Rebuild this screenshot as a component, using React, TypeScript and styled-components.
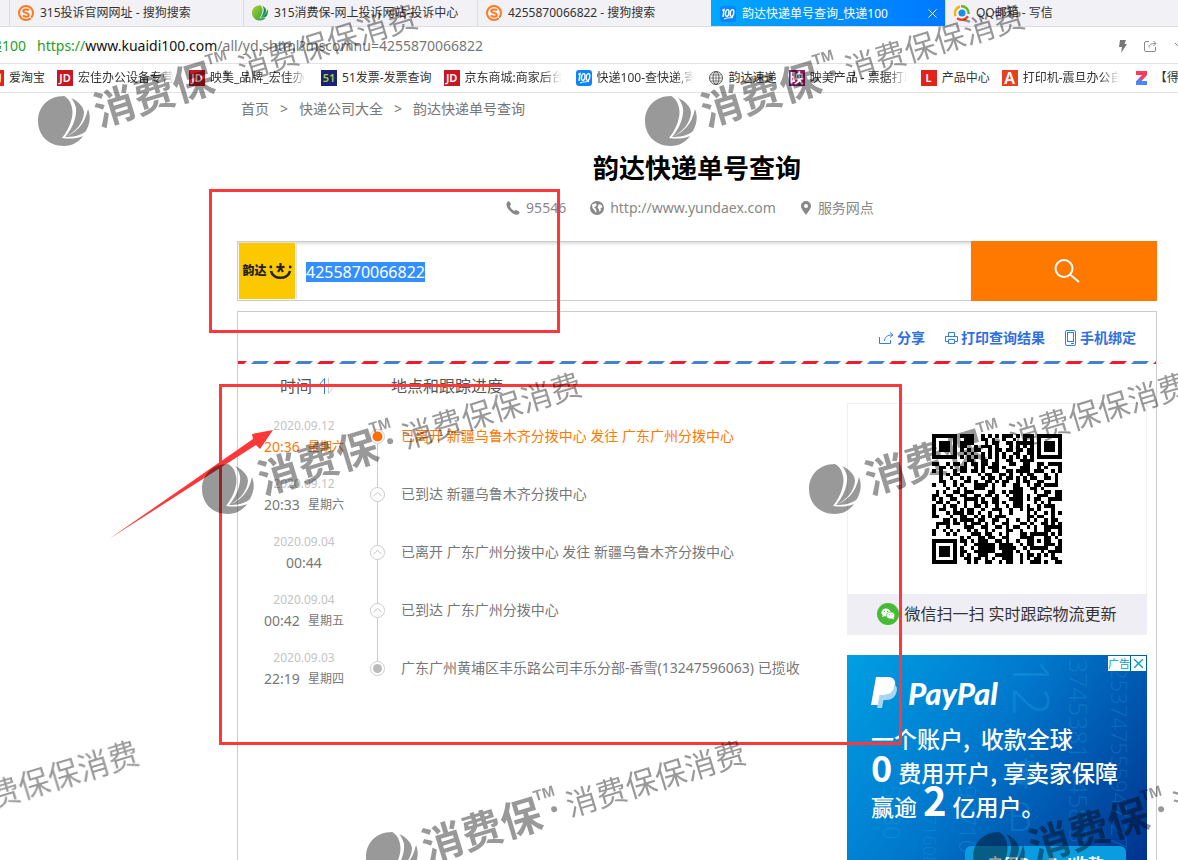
import React, { useEffect, useRef } from "react";
import styled, { createGlobalStyle, css } from "styled-components";

const GlobalStyle = createGlobalStyle`
  * { box-sizing: border-box; }
  body {
    margin: 0;
    background: #fff;
    color: #333;
    font: 14px/20px "Noto Sans", "Noto Sans CJK SC", sans-serif;
  }
  a { color: inherit; text-decoration: none; }
  button, input { font: inherit; border: 0; padding: 0; margin: 0; background: none; }
  svg { display: block; flex: none; }
`;

const Window = styled.div`
  position: relative;
  display: flex;
  flex-direction: column;
  height: 100vh;
  overflow: hidden;
`;

/* ---------- browser chrome ---------- */

const TabBar = styled.div`
  display: flex;
  flex: none;
  height: 27px;
  padding-left: 9px;
  background: #f2f1f6;
  border-bottom: 1px solid #dedee2;
  font-size: 12px;
  overflow: hidden;
`;

const Tab = styled.button<{ $active?: boolean }>`
  display: flex;
  align-items: center;
  flex: none;
  gap: 6px;
  width: 234px;
  height: 26px;
  padding: 0 8px;
  border-left: 1px solid #dcdce0;
  color: #333;
  text-align: left;
  white-space: nowrap;
  ${(p) =>
    p.$active &&
    css`
      height: 27px;
      border-left-color: #00a8ff;
      background: linear-gradient(90deg, #00a8ff, #0078ff);
      color: #fff;
    `}
`;

const TabTitle = styled.span`
  flex: 1;
`;

const AddressBar = styled.div`
  display: flex;
  align-items: center;
  flex: none;
  height: 37px;
  padding: 2px 2px 0 0;
  border-bottom: 1px solid #e2e2e2;
  white-space: nowrap;
`;

const SiteName = styled.span`
  margin-left: -26px;
  color: #1fa01f;
`;

const Url = styled.span`
  flex: 1;
  margin-left: 11px;
  color: #777;
  b { font-weight: 400; color: #111; }
  i { font-style: normal; color: #1fa01f; }
`;

const AddressTools = styled.div`
  display: flex;
  align-items: center;
  gap: 16px;
  margin-right: -10px;
`;

const Bookmarks = styled.nav`
  display: flex;
  align-items: center;
  flex: none;
  gap: 12px;
  height: 29px;
  margin-left: -12px;
  border-bottom: 1px solid #e2e2e2;
  font-size: 12px;
  white-space: nowrap;
`;

const Bookmark = styled.a`
  display: flex;
  align-items: center;
  flex: none;
  gap: 5px;
`;

const BookmarkText = styled.span<{ $long?: boolean }>`
  ${(p) =>
    p.$long &&
    css`
      width: 99px;
      overflow: hidden;
      mask-image: linear-gradient(90deg, #000 78%, transparent 98%);
    `}
`;

/* ---------- page ---------- */

const Page = styled.main`
  flex: 1;
  min-height: 0;
  padding: 6px 21px 0 237px;
`;

const Crumbs = styled.nav`
  display: flex;
  gap: 11px;
  padding-left: 4px;
  color: #777;
`;

const Title = styled.h1`
  margin: 29px 0 0;
  text-align: center;
  font-size: 26px;
  line-height: 40px;
  color: #000;
`;

const Contacts = styled.div`
  display: flex;
  justify-content: center;
  gap: 24px;
  margin: 10px 0 23px;
  padding-right: 14px;
  color: #888;
`;

const Contact = styled.a`
  display: flex;
  align-items: center;
  gap: 6px;
`;

const SearchForm = styled.form`
  display: flex;
  height: 60px;
`;

const SearchBox = styled.div`
  display: flex;
  flex: 1;
  padding: 1px;
  border: 1px solid #ccc;
  border-right: 0;
  box-shadow: inset 0 3px 4px -2px #ccc;
`;

const Courier = styled.span`
  display: flex;
  align-items: center;
  justify-content: center;
  gap: 2px;
  width: 56px;
  height: 56px;
  background: #fcc800;
  color: #222;
  font-size: 12px;
  font-weight: 900;
`;

const NumberInput = styled.input`
  flex: 1;
  min-width: 0;
  margin-left: 1px;
  padding: 2px 0 0 9px;
  border-left: 1px solid #e4e4e4;
  outline: 0;
  color: #333;
  font-size: 16px;
  &::selection { background: #338fff; color: #fff; }
`;

const SearchButton = styled.button`
  display: flex;
  align-items: center;
  justify-content: center;
  width: 186px;
  padding-left: 6px;
  background: #ff7800;
`;

const Panel = styled.section`
  margin-top: 10px;
  border: 1px solid #ccc;
`;

const Tools = styled.div`
  display: flex;
  align-items: center;
  justify-content: flex-end;
  gap: 20px;
  height: 49px;
  padding: 2px 20px 0 0;
`;

const Tool = styled.button`
  display: flex;
  align-items: center;
  gap: 3px;
  color: #2f6fe0;
  font-weight: 700;
`;

const PanelBody = styled.div`
  display: flex;
  align-items: flex-start;
  padding-right: 9px;
`;

const Track = styled.table`
  flex: 1;
  border-collapse: collapse;
  table-layout: fixed;
  color: #777;
  th {
    height: 43px;
    padding: 0;
    font-size: 16px;
    font-weight: 400;
    color: #555;
    text-align: left;
  }
  td { height: 58px; padding: 0; }
`;

const TimeHead = styled.th`
  width: 132px;
`;

const SortLabel = styled.button`
  display: flex;
  align-items: center;
  gap: 6px;
  margin-left: 42px;
  color: #555;
`;

const PlaceHead = styled.th`
  && { padding-left: 21px; }
`;

const DateText = styled.div`
  color: #c4c4c4;
  font-size: 12px;
  line-height: 21px;
  text-align: center;
`;

const TimeText = styled.div<{ $now?: boolean }>`
  display: flex;
  align-items: center;
  justify-content: center;
  gap: 8px;
  line-height: 21px;
  color: ${(p) => (p.$now ? "#ff7800" : "#777")};
  small { font-size: 12px; }
`;

const MarkCell = styled.td<{ $edge?: "first" | "last" }>`
  width: 15px;
  background: linear-gradient(#ccc, #ccc) no-repeat;
  background-size: 1px ${(p) => (p.$edge ? "58%" : "100%")};
  background-position: 7px ${(p) => (p.$edge === "first" ? "100%" : "0")};
`;

const Place = styled.td<{ $now?: boolean }>`
  && { padding-left: 16px; }
  color: ${(p) => (p.$now ? "#ff7800" : "#777")};
`;

const Side = styled.aside`
  display: flex;
  flex-direction: column;
  gap: 20px;
  width: 300px;
  padding-top: 39px;
`;

const ScanCard = styled.figure`
  margin: 0;
  border: 1px solid #efeef4;
`;

const QrArea = styled.div`
  display: flex;
  justify-content: center;
  padding: 30px 0;
`;

const ScanCaption = styled.figcaption`
  display: flex;
  align-items: center;
  justify-content: center;
  gap: 5px;
  height: 40px;
  background: #efeef4;
  color: #333;
  font-size: 16px;
`;

const Ad = styled.section`
  position: relative;
  height: 250px;
  padding: 20px 0 0 24px;
  overflow: hidden;
  background: linear-gradient(125deg, #009fe3 0%, #0077cc 42%, #0050a8 72%, #002a86 100%);
  color: #fff;
`;

const AdBadge = styled.div`
  position: absolute;
  top: 1px;
  right: 1px;
  display: flex;
  gap: 1px;
  font-size: 11px;
  line-height: 15px;
`;

const AdChip = styled.button`
  display: flex;
  align-items: center;
  justify-content: center;
  height: 15px;
  min-width: 15px;
  background: #fff;
  color: #00a5c0;
`;

const AdDigits = styled.svg`
  position: absolute;
  inset: 0;
`;

const AdBrand = styled.div`
  display: flex;
  align-items: center;
  gap: 10px;
  height: 36px;
  font: italic 900 31px/36px Lato, sans-serif;
`;

const AdCopy = styled.p`
  position: relative;
  margin: 11px 0 0;
  font-family: "Noto Sans CJK SC", sans-serif;
  font-size: 23px;
  font-weight: 500;
  line-height: 33px;
  white-space: nowrap;
`;

const AdLine = styled.span<{ $gap?: number }>`
  display: flex;
  align-items: baseline;
  gap: ${(p) => p.$gap ?? 6}px;
  height: 34px;
`;

const Figure = styled.strong<{ $size: number }>`
  font-size: ${(p) => p.$size}px;
  font-weight: 700;
  line-height: 16px;
`;

const AdButton = styled.button`
  position: relative;
  display: block;
  width: 161px;
  height: 36px;
  margin: 22px 0 0 94px;
  border-radius: 6px;
  background: #0a9ce0;
  color: #fff;
  font-size: 16px;
  font-weight: 700;
`;

/* ---------- annotations over the window ---------- */

const Overlay = styled.svg`
  position: absolute;
  inset: 0;
  width: 100%;
  height: 100%;
  pointer-events: none;
`;

/* ---------- icons ---------- */

const SogouIcon = () => (
  <svg width="16" height="16" viewBox="0 0 16 16">
    <circle cx="8" cy="8" r="7" fill="none" stroke="#ff7a1f" strokeWidth="2" />
    <path d="M11 5.2C9.500 4 5.200 4 5.300 6.200c.1 2 5.400 1.400 5.400 3.700 0 2.300-4.200 2.100-5.900.700" fill="none" stroke="#ff7a1f" strokeWidth="2" />
    <path d="M12 12l3 3" stroke="#fff" strokeWidth="1" />
  </svg>
);

const LeafIcon = () => (
  <svg width="16" height="16" viewBox="0 0 52 51">
    <defs>
      <linearGradient id="leaf" x1="0" y1="0" x2="1" y2="1">
        <stop offset="0" stopColor="#b4d52a" />
        <stop offset="1" stopColor="#1f9a45" />
      </linearGradient>
    </defs>
    <path d="M26 0C10 0 0 11 0 25s10 25 26 25c8 0 15-4 19-10-7 3-14 3-21 2 8-10 12-22 10-30-1-6-4-10-8-12z" fill="url(#leaf)" />
    <path d="M33 2c9 4 13 10 13 15-1 10-8 19-19 24 8-9 12-21 11-29-1-4-3-8-5-10zM50 13c3 7 2 15-2 22-5 5-14 6-21 6 11-4 20-13 23-28z" fill="#15914a" />
  </svg>
);

const QqIcon = () => (
  <svg width="16" height="16" viewBox="0 0 16 16">
    <circle cx="8" cy="8" r="3.500" fill="#1b8fe6" />
    <path d="M1.500 11A7 7 0 0 1 6 1.500" fill="none" stroke="#f5b400" strokeWidth="2.400" />
    <path d="M7 1.300A7 7 0 0 1 14.600 9" fill="none" stroke="#64b62a" strokeWidth="2.400" />
    <path d="M3 13.200c4 2.500 8 2 11-2" fill="none" stroke="#ee4430" strokeWidth="2.400" />
  </svg>
);

const Icon100 = () => (
  <svg width="16" height="16" viewBox="0 0 16 16">
    <rect width="16" height="16" rx="3" fill="#0a84ff" />
    <g fill="none" stroke="#fff" strokeWidth="1.400">
      <path d="M2.200 4.500L4 3.500 3 11" />
      <ellipse cx="7.200" cy="7" rx="1.700" ry="3.400" transform="rotate(10 7.200 7)" />
      <ellipse cx="12" cy="7" rx="1.700" ry="3.400" transform="rotate(10 12 7)" />
      <path d="M4 13c3-1.500 6-1 9-1.500" strokeWidth="1" />
    </g>
  </svg>
);

const Tile = styled.span<{ $bg: string; $fg?: string; $size?: number }>`
  display: flex;
  align-items: center;
  justify-content: center;
  width: 16px;
  height: 16px;
  overflow: hidden;
  background: ${(p) => p.$bg};
  color: ${(p) => p.$fg ?? "#fff"};
  font-size: ${(p) => p.$size ?? 11}px;
  font-weight: 600;
  line-height: 16px;
`;

const GlobeLineIcon = () => (
  <svg width="16" height="16" viewBox="0 0 16 16" fill="none" stroke="#555">
    <circle cx="8" cy="8" r="6.500" />
    <ellipse cx="8" cy="8" rx="3" ry="6.500" />
    <path d="M1.500 8h13M8 1.500v13M2.500 5h11M2.500 11h11" strokeWidth=".7" />
  </svg>
);

const ZIcon = () => (
  <svg width="16" height="16" viewBox="0 0 16 16">
    <path d="M2 1h11v4L7.500 11H13v4H2v-3.500L8 5H2z" fill="#fb3a5d" />
    <path d="M5 8.500L2 11.500V15h11v-4H7.500l1-1z" fill="#4a86ff" />
  </svg>
);

const PhoneIcon = () => (
  <svg width="14" height="14" viewBox="0 0 14 14">
    <path d="M1 1.200C2 .2 3 0 3.600.8l1.200 2c.4.800-.1 1.500-.9 2.100.6 2 2.200 3.800 4.500 5 .8-.9 1.500-1.100 2.200-.7l2.400 1.300c.9.600.6 1.800-.5 2.700-1.600 1.200-5 .2-8-2.700C1.400 7.500-.6 3.500 1 1.200z" fill="#888" />
  </svg>
);

const EarthIcon = () => (
  <svg width="14" height="14" viewBox="0 0 14 14">
    <circle cx="7" cy="7" r="7" fill="#888" />
    <path d="M2 3.500l3.500-1.200L7 4 5.500 5.500 4 6l1.500 1.500 1 2L6 12 4.500 9.500 2.500 7zM9 3l2.500 1 1 2.500-2 .5L11 9l-1.500 2L8.800 8 7.500 6.500z" fill="#fff" />
  </svg>
);

const PinIcon = () => (
  <svg width="12" height="14" viewBox="0 0 12 14">
    <path d="M6 0a5 5 0 0 1 5 5c0 3-3.500 6.500-5 9-1.500-2.500-5-6-5-9a5 5 0 0 1 5-5z" fill="#888" />
    <circle cx="6" cy="5" r="2" fill="#fff" />
  </svg>
);

const WeChatIcon = () => (
  <svg width="22" height="22" viewBox="0 0 22 22">
    <circle cx="11" cy="11" r="11" fill="#46bb36" />
    <ellipse cx="9" cy="9.500" rx="4.600" ry="3.900" fill="#fff" />
    <path d="M5.800 12l-.6 2.300 2.500-1.300z" fill="#fff" />
    <ellipse cx="13.600" cy="12.500" rx="4.100" ry="3.500" fill="#fff" stroke="#46bb36" strokeWidth=".7" />
    <path d="M15 15.500l2 1-.4-2z" fill="#fff" />
    <g fill="#46bb36">
      <circle cx="7.500" cy="8.400" r=".6" />
      <circle cx="10.500" cy="8.400" r=".6" />
      <circle cx="12.300" cy="11.600" r=".5" />
      <circle cx="15" cy="11.600" r=".5" />
    </g>
  </svg>
);

const Marker = ({ kind }: { kind: "now" | "step" | "start" }) => (
  <svg width="15" height="15" viewBox="0 0 15 15">
    <circle cx="7.500" cy="7.500" r="7" fill="#fff" stroke="#ccc" />
    {kind === "now" && <circle cx="7.500" cy="7.500" r="5" fill="#ff6c00" />}
    {kind === "start" && <circle cx="7.500" cy="7.500" r="4.500" fill="#bbb" />}
    {kind === "step" && <path d="M3.500 9l4-3.500 4 3.500" fill="none" stroke="#c4c4c4" />}
  </svg>
);

/* ---------- QR code: the module map, finder squares included ---------- */

const QR = [
  "#######.####..#.#.#.###.#.###.#######",
  "#.....#..###..##.#..#..#..#.#.#.....#",
  "#.###.#.####...#.##..##.#####.#.###.#",
  "#.###.#.##..#.###.#...#.#.#.#.#.###.#",
  "#.###.#.#.#.##..#.##.##.##.##.#.###.#",
  "#.....#..#.#..#.#.#.#..##..##.#.....#",
  "#######.#.#.#.#.#.#.#.#.#.#.#.#######",
  "..........##..##..#..##..####........",
  "##..#.##.#.##.##.##...##..##..##.####",
  "..##.#..##..#.#.###.#....###..#.#...#",
  "#.#...#.##.##.#..##..##.####.###..#.#",
  "..#.#.##.....#.##..##.#..#.##...#..#.",
  "..#..#..#.#...#.##.#.##.#.#.##..##.#.",
  "..##..#..##.#..##.#.##..#.##..##...#.",
  "#..#..#.#...####.#..#..##..#.##.####.",
  "....#..#.#..###..#.....###..##.#.....",
  ".#.#..##.###....##..#.####...#..##.##",
  "##..##..##..##.##.#..#.###.#..###..##",
  "#.#..##..####.#..##...####.#.##..####",
  ".##.#..#.#..#.##.##.#..###...#.#.#...",
  "#..#.##..#..##.#..#..#.###.#..#.###..",
  "#.##..#.#.##..#..###..#..#.##.#...#..",
  "#...#.###.##.#..#..#..#....#.#..#.#.#",
  "##...#..##..#.#.#.###......##.##..#..",
  "...##.#.####.##..##..#..#..#.#..#.##.",
  ".####.##.#.###.#.#..##...##.#..##.#.#",
  ".#..#....###..##..##.#.##..#.#..#####",
  "#..#.#.#..#.#..#.#...##..#...#..##..#",
  "#...#.#....###.##..#.#...##.#####.#.#",
  "........#.#..##.##..##...####...##.#.",
  "#######.##.#.###..##.#..#..##.#.##..#",
  "#.....#..#..######.####..#.##...###.#",
  "#.###.#.#..#.#####.#####..#.#####..##",
  "#.###.#.##..######..###.#..#...#.####",
  "#.###.#.#.#..###..#####..#.##.#.#.#..",
  "#.....#..##.##.#.#..###..#.#.##...##.",
  "#######...#.#..##..#.##..#..###.#..##",
];

const QrCode = () => (
  <svg width="130" height="130" viewBox="0 0 37 37" shapeRendering="crispEdges" role="img" aria-label="二维码">
    {QR.map((row, y) =>
      Array.from(row).map((c, x) => (c === "#" ? <rect key={`${x}-${y}`} x={x} y={y} width="1" height="1" /> : null)),
    )}
  </svg>
);

const Stripe = () => (
  <svg width="100%" height="3">
    <defs>
      <pattern id="mail" x="13" y="0" width="44" height="3" patternUnits="userSpaceOnUse">
        <path d="M3 0h15l-3 3H0z" fill="#4681cf" />
        <path d="M25 0h15l-3 3H22z" fill="#ee1c2e" />
      </pattern>
    </defs>
    <rect width="100%" height="3" fill="url(#mail)" />
  </svg>
);

const Watermark = ({ x, y }: { x: number; y: number }) => (
  <g transform={`translate(${x} ${y})`}>
    <g transform="translate(-25 -25)">
      <path d="M26 0C10 0 0 11 0 25s10 25 26 25c8 0 15-4 19-10-7 3-14 3-21 2 8-10 12-22 10-30-1-6-4-10-8-12z" />
      <path d="M33 2c9 4 13 10 13 15-1 10-8 19-19 24 8-9 12-21 11-29-1-4-3-8-5-10zM50 13c3 7 2 15-2 22-5 5-14 6-21 6 11-4 20-13 23-28z" />
    </g>
    <g transform="rotate(-17)" fontFamily="'Noto Sans CJK SC', sans-serif">
      <text x="33" y="16" fontSize="41" fontWeight="600">消费保</text>
      <text x="154" y="-11" fontSize="15" fontWeight="700" fontFamily="'Liberation Sans', sans-serif">TM</text>
      <circle cx="170" cy="2" r="3" />
      <text x="183" y="14" fontSize="31" fontWeight="400">消费保保消费</text>
    </g>
  </g>
);

/* ---------- data ---------- */

const bookmarks: { icon: React.ReactNode; text: string; long?: boolean }[] = [
  { icon: <Tile $bg="#e1251b">淘</Tile>, text: "爱淘宝" },
  { icon: <Tile $bg="#c81623">JD</Tile>, text: "宏佳办公设备专营店", long: true },
  { icon: <Tile $bg="#c81623">JD</Tile>, text: "映美_品牌_宏佳办公", long: true },
  { icon: <Tile $bg="#1b1f7e" $fg="#a4d31e">51</Tile>, text: "51发票-发票查询" },
  { icon: <Tile $bg="#c81623">JD</Tile>, text: "京东商城:商家后台", long: true },
  { icon: <Icon100 />, text: "快递100-查快递,寄快递", long: true },
  { icon: <GlobeLineIcon />, text: "韵达速递" },
  { icon: <Tile $bg="#8a1a72" $size={14}>映</Tile>, text: "映美产品 - 票据打印机", long: true },
  { icon: <Tile $bg="#e2231a">L</Tile>, text: "产品中心" },
  { icon: <Tile $bg="#e8401c" $size={16}>A</Tile>, text: "打印机-震旦办公自动化", long: true },
  { icon: <ZIcon />, text: "【得力】" },
];

const steps: { date: string; time: string; day?: string; place: string; kind: "now" | "step" | "start" }[] = [
  { date: "2020.09.12", time: "20:36", day: "星期六", place: "已离开 新疆乌鲁木齐分拨中心 发往 广东广州分拨中心", kind: "now" },
  { date: "2020.09.12", time: "20:33", day: "星期六", place: "已到达 新疆乌鲁木齐分拨中心", kind: "step" },
  { date: "2020.09.04", time: "00:44", place: "已离开 广东广州分拨中心 发往 新疆乌鲁木齐分拨中心", kind: "step" },
  { date: "2020.09.04", time: "00:42", day: "星期五", place: "已到达 广东广州分拨中心", kind: "step" },
  { date: "2020.09.03", time: "22:19", day: "星期四", place: "广东广州黄埔区丰乐路公司丰乐分部-香雪(13247596063) 已揽收", kind: "start" },
];

const watermarks = [
  [63, 121],
  [670, 121],
  [227, 489],
  [834, 489],
  [-216, 857],
  [391, 857],
  [998, 857],
];

export default function App() {
  const numberRef = useRef<HTMLInputElement>(null);
  useEffect(() => {
    numberRef.current?.focus();
    numberRef.current?.select();
  }, []);

  return (
    <Window>
      <GlobalStyle />
      <TabBar>
        <Tab><SogouIcon /><TabTitle>315投诉官网网址 - 搜狗搜索</TabTitle></Tab>
        <Tab><LeafIcon /><TabTitle>315消费保-网上投诉网站-投诉中心</TabTitle></Tab>
        <Tab><SogouIcon /><TabTitle>4255870066822 - 搜狗搜索</TabTitle></Tab>
        <Tab $active>
          <Icon100 />
          <TabTitle>韵达快递单号查询_快递100</TabTitle>
          <svg width="9" height="9" viewBox="0 0 9 9" stroke="#fff"><path d="M.5.5l8 8M8.500.5l-8 8" /></svg>
        </Tab>
        <Tab><QqIcon /><TabTitle>QQ邮箱 - 写信</TabTitle></Tab>
      </TabBar>
      <AddressBar>
        <SiteName>快递100</SiteName>
        <Url><i>https://</i><b>www.kuaidi100.com</b>/all/yd.shtml?mscomnu=4255870066822</Url>
        <AddressTools>
          <svg width="10" height="13" viewBox="0 0 10 13"><path d="M2 0h6L6.500 4H9L3 13l1-6H1z" fill="#777" /></svg>
          <svg width="14" height="12" viewBox="0 0 14 12" fill="none" stroke="#888">
            <path d="M5 1.500H2a1.500 1.500 0 0 0-1.500 1.500v7A1.500 1.500 0 0 0 2 11.500h8a1.500 1.500 0 0 0 1.500-1.500V7M5 7.500C5 4.500 7 3.500 11.500 3.500M9.500 1l2.500 2.500L9.500 6" />
          </svg>
          <svg width="12" height="8" viewBox="0 0 12 8" fill="none" stroke="#888"><path d="M1 1l5 5 5-5" /></svg>
        </AddressTools>
      </AddressBar>
      <Bookmarks>
        {bookmarks.map((b) => (
          <Bookmark href="#" key={b.text}>
            {b.icon}
            <BookmarkText $long={b.long}>{b.text}</BookmarkText>
          </Bookmark>
        ))}
      </Bookmarks>

      <Page>
        <Crumbs>
          <a href="#">首页</a>
          <span>&gt;</span>
          <a href="#">快递公司大全</a>
          <span>&gt;</span>
          <span>韵达快递单号查询</span>
        </Crumbs>
        <Title>韵达快递单号查询</Title>
        <Contacts>
          <Contact href="#"><PhoneIcon />95546</Contact>
          <Contact href="#"><EarthIcon />http://www.yundaex.com</Contact>
          <Contact href="#"><PinIcon />服务网点</Contact>
        </Contacts>
        <SearchForm onSubmit={(e) => e.preventDefault()}>
          <SearchBox>
            <Courier>
              韵达
              <svg width="23" height="18" viewBox="0 0 23 18">
                <path d="M2 9C4 18 19 18 21 9" fill="none" stroke="#222" strokeWidth="2.600" />
                <path d="M11.500 1v5M7.500 4.500l4 1.500 4-1.500M9 10l2.500-4 2.500 4" fill="none" stroke="#222" strokeWidth="2.200" />
                <circle cx="1.800" cy="5" r="1.400" fill="#222" />
                <circle cx="21.200" cy="5" r="1.400" fill="#222" />
              </svg>
            </Courier>
            <NumberInput ref={numberRef} aria-label="快递单号" defaultValue="4255870066822" />
          </SearchBox>
          <SearchButton aria-label="查询">
            <svg width="26" height="24" viewBox="0 0 26 24" fill="none" stroke="#fff" strokeWidth="2">
              <circle cx="10" cy="9.500" r="8.500" />
              <path d="M16 15.500l9 7.500" />
            </svg>
          </SearchButton>
        </SearchForm>

        <Panel>
          <Tools>
            <Tool>
              <svg width="15" height="12" viewBox="0 0 15 12" fill="none" stroke="#2f7fe8"><path d="M.5 5v6.500h11V8M5.500 9c0-4 3-6 7.500-6M11 .5L14 3l-3 2.500" /></svg>
              分享
            </Tool>
            <Tool>
              <svg width="13" height="12" viewBox="0 0 13 12" fill="none" stroke="#2f7fe8"><path d="M3.500 4.500v-4h6v4M3.500 9.500h-3v-5h12v5h-3M3.500 7.500h6v4h-6z" /></svg>
              打印查询结果
            </Tool>
            <Tool>
              <svg width="12" height="16" viewBox="0 0 12 16" fill="none" stroke="#2f7fe8"><rect x=".5" y=".5" width="10" height="15" rx="1.500" /><rect x="2.500" y="2.500" width="6" height="9" /><path d="M6 13.500h3" /></svg>
              手机绑定
            </Tool>
          </Tools>
          <Stripe />
          <PanelBody>
            <Track>
              <thead>
                <tr>
                  <TimeHead scope="col">
                    <SortLabel>
                      时间
                      <svg width="16" height="16" viewBox="0 0 16 16" fill="none">
                        <path d="M1.500 6.500L6.500.5V16" stroke="#2f7fe8" />
                        <path d="M10.500 0v15.500l4-5.500" stroke="#ccc" />
                      </svg>
                    </SortLabel>
                  </TimeHead>
                  <PlaceHead scope="col" colSpan={2}>地点和跟踪进度</PlaceHead>
                </tr>
              </thead>
              <tbody>
                {steps.map((s, i) => (
                  <tr key={s.date + s.time}>
                    <td>
                      <DateText>{s.date}</DateText>
                      <TimeText $now={s.kind === "now"}>
                        {s.time}
                        {s.day && <small>{s.day}</small>}
                      </TimeText>
                    </td>
                    <MarkCell $edge={i === 0 ? "first" : i === steps.length - 1 ? "last" : undefined}>
                      <Marker kind={s.kind} />
                    </MarkCell>
                    <Place $now={s.kind === "now"}>{s.place}</Place>
                  </tr>
                ))}
              </tbody>
            </Track>
            <Side>
              <ScanCard>
                <QrArea><QrCode /></QrArea>
                <ScanCaption><WeChatIcon />微信扫一扫 实时跟踪物流更新</ScanCaption>
              </ScanCard>
              <Ad>
                <AdDigits width="300" height="250" viewBox="0 0 300 250" aria-hidden="true" fill="#35b6f2" fillOpacity=".22" fontFamily="'Noto Sans', sans-serif" fontWeight="300">
                  <text transform="translate(222 4) rotate(90)" fontSize="25">3745381 4458 37</text>
                  <text transform="translate(264 12) rotate(90)" fontSize="22">253747555947 27</text>
                  <text transform="translate(166 4) rotate(90)" fontSize="50">12</text>
                  <text x="160" y="176" fontSize="40">B</text>
                  <text x="168" y="132" fontSize="38" fontWeight="700">$</text>
                  <text transform="translate(112 130) rotate(90)" fontSize="24">98710</text>
                  <text transform="translate(76 160) rotate(90)" fontSize="18">71608</text>
                  <text transform="translate(36 130) rotate(90)" fontSize="24">5780</text>
                </AdDigits>
                <AdBadge>
                  <AdChip>广告</AdChip>
                  <AdChip aria-label="关闭广告">
                    <svg width="9" height="9" viewBox="0 0 9 9" stroke="#00a5c0" strokeWidth="1.400"><path d="M0 0l9 9M9 0L0 9" /></svg>
                  </AdChip>
                </AdBadge>
                <AdBrand>
                  <svg width="27" height="32" viewBox="0 0 27 32">
                    <path d="M5 0h12c6 0 8 4 7 9-1 6-5 9-11 9H9L7 28H0z" fill="#fff" />
                    <path d="M23 7c3 2 3.500 5 2.500 8-1 5-5 8-10 8h-3l-1.500 8H6l2.500-13H14c5 0 9-4 9-11z" fill="#b9ddf5" fillOpacity=".9" />
                  </svg>
                  PayPal
                </AdBrand>
                <AdCopy>
                  <AdLine $gap={11}><span>一个账户,</span><span>收款全球</span></AdLine>
                  <AdLine><Figure $size={36}>0</Figure><span>费用开户,</span><span>享卖家保障</span></AdLine>
                  <AdLine><span>赢逾</span><Figure $size={40}>2</Figure><span>亿用户。</span></AdLine>
                </AdCopy>
                <AdButton>启用PayPal收款</AdButton>
              </Ad>
            </Side>
          </PanelBody>
        </Panel>
      </Page>

      <Overlay aria-hidden="true">
        <g fill="none" stroke="#fe3838" strokeWidth="3">
          <rect x="210.500" y="190.500" width="348" height="141" />
          <rect x="220.500" y="385.500" width="680" height="358" />
        </g>
        <path d="M109 539L253 439l-1-5 21-4-13 19-4-4z" fill="#fe3838" />
        <g fill="#000" opacity=".4">
          {watermarks.map(([x, y]) => (
            <Watermark key={`${x}-${y}`} x={x} y={y} />
          ))}
        </g>
      </Overlay>
    </Window>
  );
}
